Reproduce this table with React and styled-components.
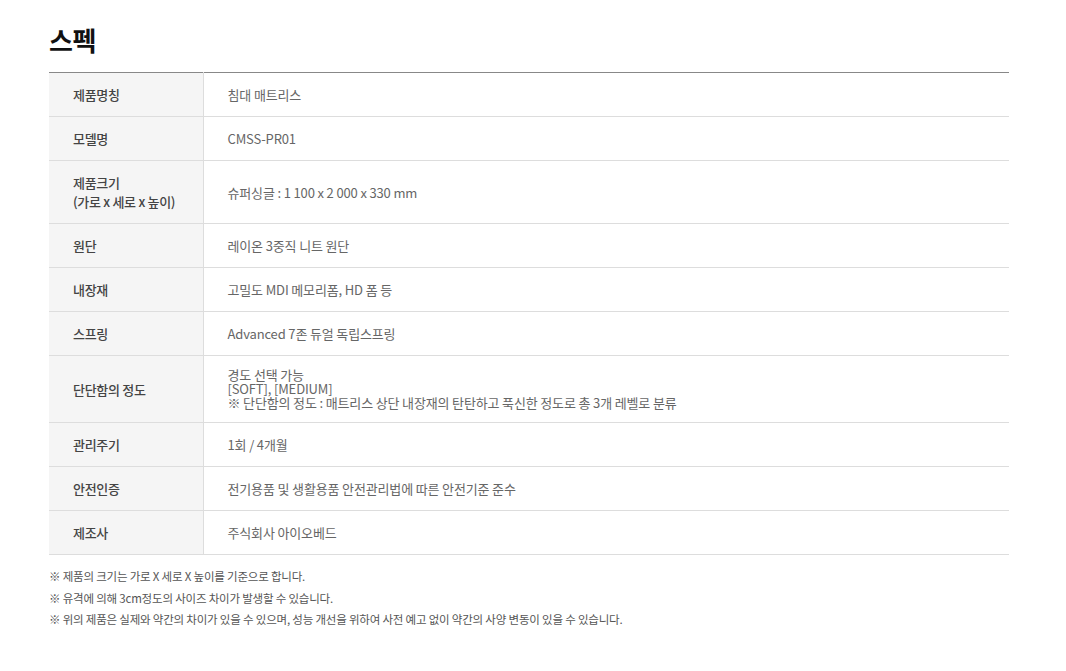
import React from "react";
import styled, { createGlobalStyle } from "styled-components";

const Global = createGlobalStyle`
  html, body { margin: 0; padding: 0; background: #fff; }
  body { font-family: "Noto Sans CJK KR", "Noto Sans", sans-serif; }
`;

const Page = styled.div`
  width: 960px;
  padding: 22px 0 30px 49px;
`;

const Title = styled.h2`
  margin: 0 0 14px;
  font-size: 26px;
  font-weight: 700;
  line-height: 36px;
  color: #111;
  letter-spacing: -0.5px;
`;

const Table = styled.table`
  width: 100%;
  border-collapse: collapse;
  border-top: 1px solid #888;
  font-size: 13px;
`;

const Row = styled.tr`
  border-bottom: 1px solid #ddd;
`;

const Th = styled.th`
  width: 154px;
  box-sizing: border-box;
  background: #f5f5f5;
  border-right: 1px solid #ddd;
  padding: 12px 24px;
  height: ${(p) => p.$h || 43}px;
  text-align: left;
  font-weight: 500;
  color: #444;
  line-height: 19px;
  letter-spacing: -0.3px;
`;

const Td = styled.td`
  padding: 12px 24px;
  color: #666;
  line-height: ${(p) => (p.$tight ? 14 : 19)}px;
  letter-spacing: -0.15px;
`;

const Notes = styled.ul`
  list-style: none;
  margin: 11px 0 0;
  padding: 0;
`;

const Note = styled.li`
  font-size: 11.5px;
  color: #555;
  line-height: 21.5px;
  letter-spacing: -0.2px;
`;

const rows = [
  { k: "제품명칭", v: ["침대 매트리스"] },
  { k: "모델명", v: ["CMSS-PR01"] },
  { k: ["제품크기", "(가로 x 세로 x 높이)"], v: ["슈퍼싱글 : 1 100 x 2 000 x 330 mm"], h: 62 },
  { k: "원단", v: ["레이온 3중직 니트 원단"] },
  { k: "내장재", v: ["고밀도 MDI 메모리폼, HD 폼 등"] },
  { k: "스프링", v: ["Advanced 7존 듀얼 독립스프링"] },
  {
    k: "단단함의 정도",
    v: [
      "경도 선택 가능",
      "[SOFT], [MEDIUM]",
      "※ 단단함의 정도 : 매트리스 상단 내장재의 탄탄하고 푹신한 정도로 총 3개 레벨로 분류",
    ],
    h: 66,
    tight: true,
  },
  { k: "관리주기", v: ["1회 / 4개월"] },
  { k: "안전인증", v: ["전기용품 및 생활용품 안전관리법에 따른 안전기준 준수"] },
  { k: "제조사", v: ["주식회사 아이오베드"], h: 42 },
];

const lines = (arr) =>
  (Array.isArray(arr) ? arr : [arr]).map((t, i) => (
    <React.Fragment key={i}>
      {i > 0 && <br />}
      {t}
    </React.Fragment>
  ));

export default function App() {
  return (
    <>
      <Global />
      <Page>
        <Title>스펙</Title>
        <Table>
          <tbody>
            {rows.map((r, i) => (
              <Row key={i}>
                <Th $h={r.h}>{lines(r.k)}</Th>
                <Td $tight={r.tight}>{lines(r.v)}</Td>
              </Row>
            ))}
          </tbody>
        </Table>
        <Notes>
          <Note>※ 제품의 크기는 가로 X 세로 X 높이를 기준으로 합니다.</Note>
          <Note>※ 유격에 의해 3cm정도의 사이즈 차이가 발생할 수 있습니다.</Note>
          <Note>※ 위의 제품은 실제와 약간의 차이가 있을 수 있으며, 성능 개선을 위하여 사전 예고 없이 약간의 사양 변동이 있을 수 있습니다.</Note>
        </Notes>
      </Page>
    </>
  );
}
